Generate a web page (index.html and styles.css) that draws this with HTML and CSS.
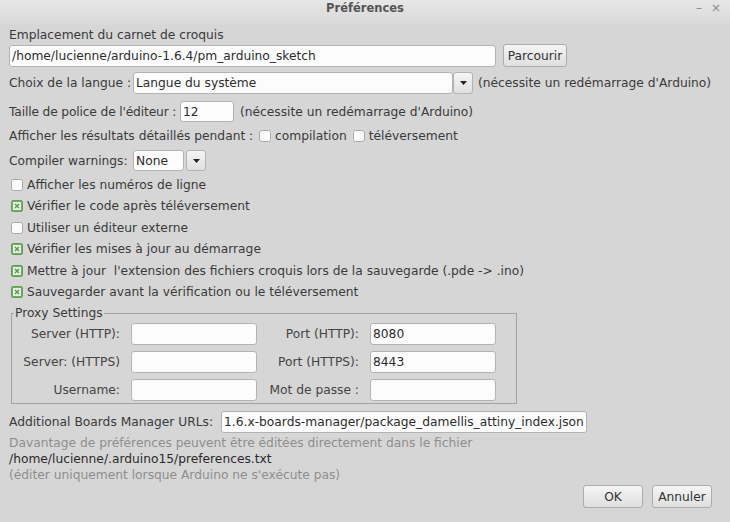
FILE: index.html
```html
<!DOCTYPE html>
<html lang="fr">
<head>
<meta charset="utf-8">
<title>Préférences</title>
<link rel="stylesheet" href="styles.css">
</head>
<body>
<div class="titlebar">
  <span></span>
  <span class="title">Préférences</span>
  <span class="wm"><span class="wm-min">–</span><span class="wm-close">×</span></span>
</div>
<div class="content">
  <div class="row r-label">Emplacement du carnet de croquis</div>
  <div class="row r-path">
    <div class="field f-path">/home/lucienne/arduino-1.6.4/pm_arduino_sketch</div>
    <div class="btn b-browse">Parcourir</div>
  </div>
  <div class="row r-lang">
    <span class="lbl lbl-combo">Choix de la langue :</span>
    <div class="field f-lang">Langue du système</div>
    <div class="arrow a-lang"><svg width="7" height="4" viewBox="0 0 7 4"><path d="M0 0h7L3.5 4z" fill="#222"/></svg></div>
    <span class="note-r">(nécessite un redémarrage d'Arduino)</span>
  </div>
  <div class="row r-font">
    <span class="lbl lbl-font">Taille de police de l'éditeur :</span>
    <div class="field f-font">12</div>
    <span class="note-f">(nécessite un redémarrage d'Arduino)</span>
  </div>
  <div class="row r-verbose">
    <span class="lbl lbl-verbose">Afficher les résultats détaillés pendant :</span>
    <span class="cb cb-first"><svg width="12" height="12" viewBox="0 0 12 12"><rect x=".5" y=".5" width="11" height="11" rx="2" fill="#fafafa" stroke="#a9a9a9"/></svg></span>
    <span>compilation</span>
    <span class="cb cb-second"><svg width="12" height="12" viewBox="0 0 12 12"><rect x=".5" y=".5" width="11" height="11" rx="2" fill="#fafafa" stroke="#a9a9a9"/></svg></span>
    <span>téléversement</span>
  </div>
  <div class="row r-warn">
    <span class="lbl lbl-combo">Compiler warnings:</span>
    <div class="field f-warn">None</div>
    <div class="arrow a-warn"><svg width="7" height="4" viewBox="0 0 7 4"><path d="M0 0h7L3.5 4z" fill="#222"/></svg></div>
  </div>
  <div class="cblist">
    <div class="row r-cb"><span class="cb"><svg width="12" height="12" viewBox="0 0 12 12"><rect x=".5" y=".5" width="11" height="11" rx="2" fill="#fafafa" stroke="#a9a9a9"/></svg></span><span>Afficher les numéros de ligne</span></div>
    <div class="row r-cb"><span class="cb"><svg width="12" height="12" viewBox="0 0 12 12"><rect x=".5" y=".5" width="11" height="11" rx="1.5" fill="#e4ede0" stroke="#62a058"/><rect x="1.5" y="1.5" width="9" height="9" fill="none" stroke="#6fae63"/><path d="M4 4L8 8M8 4L4 8" stroke="#5c9452" stroke-width="1.3"/></svg></span><span>Vérifier le code après téléversement</span></div>
    <div class="row r-cb"><span class="cb"><svg width="12" height="12" viewBox="0 0 12 12"><rect x=".5" y=".5" width="11" height="11" rx="2" fill="#fafafa" stroke="#a9a9a9"/></svg></span><span>Utiliser un éditeur externe</span></div>
    <div class="row r-cb"><span class="cb"><svg width="12" height="12" viewBox="0 0 12 12"><rect x=".5" y=".5" width="11" height="11" rx="1.5" fill="#e4ede0" stroke="#62a058"/><rect x="1.5" y="1.5" width="9" height="9" fill="none" stroke="#6fae63"/><path d="M4 4L8 8M8 4L4 8" stroke="#5c9452" stroke-width="1.3"/></svg></span><span>Vérifier les mises à jour au démarrage</span></div>
    <div class="row r-cb"><span class="cb"><svg width="12" height="12" viewBox="0 0 12 12"><rect x=".5" y=".5" width="11" height="11" rx="1.5" fill="#e4ede0" stroke="#62a058"/><rect x="1.5" y="1.5" width="9" height="9" fill="none" stroke="#6fae63"/><path d="M4 4L8 8M8 4L4 8" stroke="#5c9452" stroke-width="1.3"/></svg></span><span>Mettre à jour &nbsp;l'extension des fichiers croquis lors de la sauvegarde (.pde -&gt; .ino)</span></div>
    <div class="row r-cb"><span class="cb"><svg width="12" height="12" viewBox="0 0 12 12"><rect x=".5" y=".5" width="11" height="11" rx="1.5" fill="#e4ede0" stroke="#62a058"/><rect x="1.5" y="1.5" width="9" height="9" fill="none" stroke="#6fae63"/><path d="M4 4L8 8M8 4L4 8" stroke="#5c9452" stroke-width="1.3"/></svg></span><span>Sauvegarder avant la vérification ou le téléversement</span></div>
  </div>
  <fieldset class="proxy">
    <legend>Proxy Settings</legend>
    <div class="pgrid">
      <span class="plabel">Server (HTTP):</span><div class="field pf"></div>
      <span class="plabel">Port (HTTP):</span><div class="field pf">8080</div>
      <span class="plabel">Server: (HTTPS)</span><div class="field pf"></div>
      <span class="plabel">Port (HTTPS):</span><div class="field pf">8443</div>
      <span class="plabel">Username:</span><div class="field pf"></div>
      <span class="plabel">Mot de passe :</span><div class="field pf"></div>
    </div>
  </fieldset>
  <div class="row r-boards">
    <span class="lbl lbl-boards">Additional Boards Manager URLs:</span>
    <div class="field f-boards">1.6.x-boards-manager/package_damellis_attiny_index.json</div>
  </div>
  <div class="notes">
    <div class="grey">Davantage de préférences peuvent être éditées directement dans le fichier</div>
    <div class="dark">/home/lucienne/.arduino15/preferences.txt</div>
    <div class="grey">(éditer uniquement lorsque Arduino ne s'exécute pas)</div>
  </div>
  <div class="row r-buttons">
    <div class="btn b-dlg">OK</div>
    <div class="btn b-dlg">Annuler</div>
  </div>
</div>
</body>
</html>
```
FILE: styles.css
```css
html, body { margin: 0; padding: 0; }
body {
  width: 730px;
  height: 522px;
  overflow: hidden;
  background: #d6d6d6;
  font-family: "DejaVu Sans", sans-serif;
  font-size: 12.25px;
  color: #3a3a3a;
}
.titlebar {
  height: 25px;
  display: grid;
  grid-template-columns: 1fr auto 1fr;
  background: linear-gradient(#e7e7e7, #d8d8d8);
}
.title {
  font-weight: bold;
  font-size: 11.5px;
  line-height: 16px;
  color: #555;
}
.wm {
  justify-self: end;
  display: flex;
  gap: 9px;
  padding-right: 9px;
  line-height: 16px;
  color: #8a8a8a;
  font-size: 12px;
}
.content {
  padding-left: 9px;
  display: flex;
  flex-direction: column;
}
.row { display: flex; align-items: center; white-space: nowrap; }
.lbl { flex: none; }
.lbl-combo { width: 124px; }
.lbl-font { width: 171px; letter-spacing: -0.15px; }
.lbl-verbose { width: 250px; }
.lbl-boards { width: 212px; }
.r-label { height: 19px; }
.r-path { height: 23px; }
.r-lang { height: 22px; margin-top: 5px; }
.r-font { height: 21px; margin-top: 7px; }
.r-verbose { height: 20px; margin-top: 4px; }
.r-warn { height: 21px; margin-top: 4px; }
.cblist { margin-top: 3px; display: flex; flex-direction: column; }
.r-cb { height: 21.5px; }
.field {
  box-sizing: border-box;
  height: 22px;
  border: 1px solid #b3b3b3;
  border-radius: 3px;
  background: #fcfcfc;
  padding: 0 2px;
  display: flex;
  align-items: center;
  color: #2c2c2c;
  overflow: hidden;
  flex: none;
}
.btn {
  box-sizing: border-box;
  height: 23px;
  border: 1px solid #acacac;
  border-radius: 3px;
  background: linear-gradient(#f5f5f5, #dfdfdf);
  display: flex;
  align-items: center;
  justify-content: center;
  color: #333;
}
.arrow {
  box-sizing: border-box;
  height: 22px;
  width: 20px;
  border: 1px solid #b3b3b3;
  border-radius: 3px;
  background: linear-gradient(#f5f5f5, #e0e0e0);
  display: flex;
  align-items: center;
  justify-content: center;
  flex: none;
}
.f-path { width: 487px; }
.b-browse { width: 64px; margin-left: 7px; }
.f-lang { width: 320px; }
.note-r { margin-left: 5px; }
.f-font { width: 54px; height: 21px; }
.note-f { margin-left: 6px; }
.cb { display: flex; flex: none; width: 12px; height: 12px; margin-left: 2px; margin-right: 4px; }
.cb-first { margin-left: 0; margin-right: 4px; }
.cb-second { margin-left: 6px; margin-right: 4px; }
.f-warn { width: 51px; height: 21px; }
.a-warn { height: 21px; margin-left: 2px; }
.proxy {
  box-sizing: border-box;
  width: 506px;
  margin: 2px 0 0 2px;
  padding: 0 0 2px 0;
  border: 1px solid #a3a3a3;
  min-width: 0;
}
.proxy legend {
  padding: 0 1px;
  margin-left: 2px;
  line-height: 16px;
  color: #3a3a3a;
}
.pgrid {
  margin-top: 2px;
  display: grid;
  grid-template-columns: 119px 126px 113px 126px;
  grid-auto-rows: 22px;
  row-gap: 6px;
}
.plabel {
  text-align: right;
  padding-right: 11px;
  line-height: 22px;
  color: #444;
}
.pf { width: 126px; }
.r-boards { height: 22px; margin-top: 7px; }
.f-boards { width: 366px; color: #2c2c2c; }
.notes { margin-top: 2px; line-height: 16px; }
.grey { color: #8e8e8e; }
.dark { color: #2a2a2a; }
.r-buttons {
  margin-top: 2px;
  justify-content: flex-end;
  gap: 9px;
  padding-right: 18px;
}
.b-dlg { width: 60px; }
```
